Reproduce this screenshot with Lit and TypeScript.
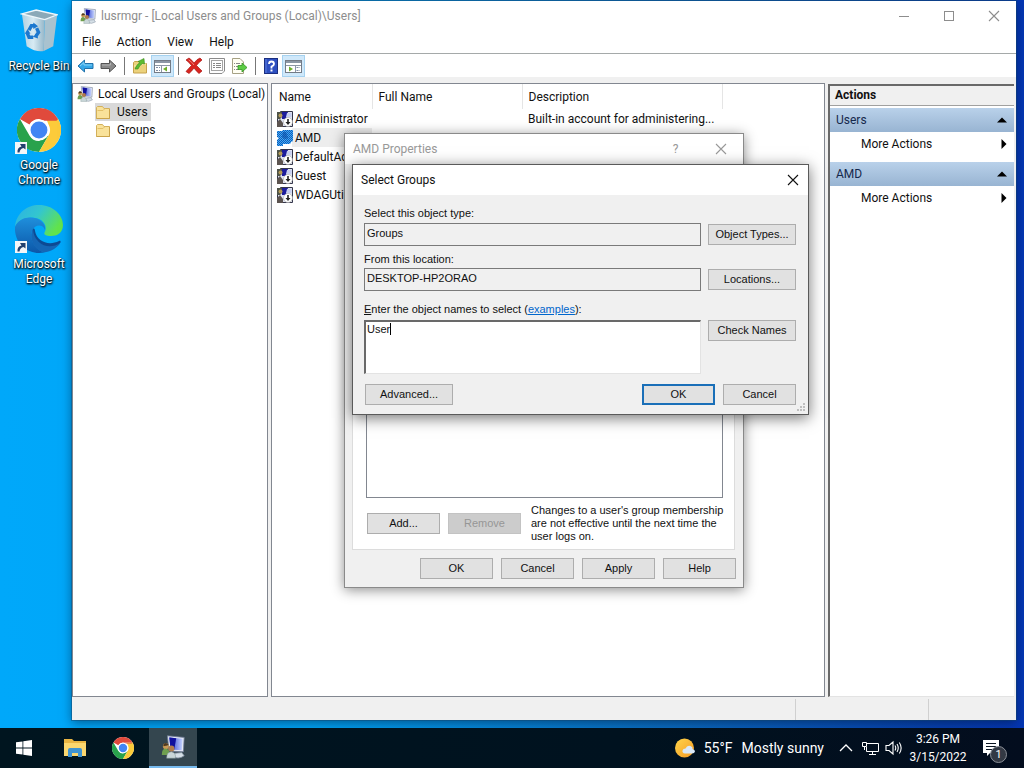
import { LitElement, html, css, svg, nothing } from "lit";
import { customElement, property } from "lit/decorators.js";
import { classMap } from "lit/directives/class-map.js";

const pcBody = svg`
  <path d="M8 1 L29 3 L28 21 L10 20Z" fill="#e4e8f2" stroke="#6c7894" stroke-width="1"/>
  <path d="M10.500 3 L27 4.800 L26 19 L12 18Z" fill="url(#scr)"/>
  <path d="M10.500 3 L19 4 L16.500 18.300 L12 18Z" fill="#10109c"/>
  <path d="M15 23 L26 22 L29 26 Q22 31 14 27Z" fill="#d5dfe6" stroke="#8390a0"/>
  <circle cx="6" cy="14" r="3.600" fill="#c99a55"/>
  <path d="M1 25 Q1 17 6 17 Q11 18 11 25Z" fill="#6f9f4f"/>
  <circle cx="13" cy="17" r="3.800" fill="#b07c4c"/>
  <path d="M7 29 Q7 21 13 21 Q19 22 18 29Z" fill="#c9d6d8" stroke="#768c8c" stroke-width=".6"/>
  <path d="M3 12 Q5 8 9.500 12 L8 13 L3 14Z" fill="#4f3a22"/>`;
const scr = svg`<defs><linearGradient id="scr"><stop offset="0" stop-color="#2436c8"/><stop offset="1" stop-color="#c6d4ff"/></linearGradient></defs>`;

const pcIcon = (s: number) => html`<svg class="pc" width=${s} height=${s} viewBox="0 0 30 30" aria-hidden="true">${scr}${pcBody}</svg>`;

const userIcon = html`<svg width="16" height="16" viewBox="0 0 16 16" aria-hidden="true">
  <path d="M3.500 .5H15.500V15.500H.5V8Z" fill="#dfe3f1" stroke="#33354a"/>
  <path d="M5 1H11L9 8H5Z" fill="#1c1c9c"/><path d="M10 2H14.500V6H9Z" fill="#c6cef0"/>
  <path d="M0 1H5V6L3 8H0Z" fill="#4e5348"/><circle cx="3.500" cy="4.500" r="2" fill="#b59c58"/>
  <path d="M0 16V11L3 8L6 12V16Z" fill="#5c5450"/>
  <circle cx="11" cy="11" r="4.500" fill="#fff" stroke="#aaa" stroke-width=".6"/>
  <path d="M10.200 8H11.800V11H13.500L11 14L8.500 11H10.200Z" fill="#222"/></svg>`;

const userSelIcon = html`<svg width="16" height="16" viewBox="0 0 16 16" aria-hidden="true">
  <defs><pattern id="dith" width="2" height="2" patternUnits="userSpaceOnUse"><rect width="2" height="2" fill="#4ba6ee"/><rect width="1" height="1" fill="#0a5cb8"/><rect x="1" y="1" width="1" height="1" fill="#0a66c8"/></pattern></defs>
  <path d="M0 1H5L6 0H16V11L14 12V13L12 14H6V16H0V10L2 8L0 7Z" fill="url(#dith)"/><path d="M6 2H9L11 8L8 9L5 7Z" fill="#0a50a8" opacity=".6"/></svg>`;

const folderIcon = html`<svg width="16" height="16" viewBox="0 0 16 16" aria-hidden="true">
  <path d="M1.500 3.500V14.500H14.500V4.500H9L7.500 2.500H2.500Z" fill="#f9e29a" stroke="#d3b05a"/>
  <path d="M2.500 6.500H8L10 4.500" fill="none" stroke="#e2c069"/><path d="M14.500 5V14.500H1.500" fill="none" stroke="#cba44a"/></svg>`;

const arrow = (flip: boolean) => html`<svg width="17" height="16" viewBox="0 0 17 16" aria-hidden="true">
  ${flip
    ? svg`<path d="M16 8L9.500 2V5.500H1V10.500H9.500V14Z" fill="#8a8a8a" stroke="#555"/><path d="M2 7H10.500V5" stroke="#b4b4b4" fill="none"/>`
    : svg`<path d="M1 8L7.500 2V5.500H16V10.500H7.500V14Z" fill="#35a7e8" stroke="#2272ab"/><path d="M3 8L7 4.500V7H15" stroke="#8ad4f8" fill="none"/>`}</svg>`;

const upFolder = html`<svg width="16" height="16" viewBox="0 0 16 16" aria-hidden="true">
  <path d="M1.500 4.500V15H14.500V5.500H10L8.500 3.500H2.500Z" fill="#ecd27c" stroke="#c6a24d"/><path d="M2 8H8L10 6H14" fill="none" stroke="#fff0b4"/>
  <path d="M3 11Q4 7 8 4.500L6 3.500L12 .5L12.500 6L10.500 5.500Q7 8 6 11Z" fill="#5ebc32" stroke="#3b8c1d" stroke-width=".6"/></svg>`;

const paneIcon = (right: boolean) => html`<svg width="17" height="16" viewBox="0 0 17 16" aria-hidden="true">
  <rect x=".5" y="2.500" width="16" height="12" fill="#fff" stroke="#737b86"/><rect x="1" y="3" width="15" height="2" fill="#8c97a5"/>
  <path d="M1 7.500H16M${right ? 10.500 : 7.500} 7V14" stroke="#8c97a5" fill="none"/>
  <path d=${right ? "M11.500 9.500H15M11.500 12.500H15" : "M2 9.500H6M2 12.500H6"} stroke="#7d8da4" stroke-dasharray="2 1"/>
  <path d=${right ? "M4 8.500L8 11L4 13.500Z" : "M13 8.500L9 11L13 13.500Z"} fill="#6cae28"/></svg>`;

const delIcon = html`<svg width="18" height="17" viewBox="0 0 18 17" aria-hidden="true">
  <path d="M1 3L4 1Q7 3 9 6Q12 2 15 1L17 3Q13 6 11.500 8.500Q14 11 17 14L14 16.500Q11 14 9 11Q7 14 4 16.500L1 14.500Q4 11 6.500 8.500Q4 5 1 3Z" fill="#d8241f" stroke="#a81512" stroke-width=".7"/><path d="M3.500 2.800Q7 5 9 8" stroke="#f08078" fill="none"/></svg>`;

const propIcon = html`<svg width="16" height="16" viewBox="0 0 16 16" aria-hidden="true">
  <path d="M.5 .5H15.500V13L13 15.500H.5Z" fill="#fdfdfd" stroke="#8b8b8b"/><rect x="2.500" y="2.500" width="11" height="10" fill="#fff" stroke="#a4a4a4"/>
  <path d="M4 5.500H6M7 5.500H12M4 7.500H6M7 7.500H12M4 9.500H6M7 9.500H12" stroke="#888"/></svg>`;

const exportIcon = html`<svg width="17" height="16" viewBox="0 0 17 16" aria-hidden="true">
  <path d="M1.500 .5H9L12.500 4V15.500H1.500Z" fill="#fffef2" stroke="#a6a184"/><path d="M3 5.500H4M5 5.500H9M3 8.500H4M5 8.500H8M3 11.500H4M5 11.500H8" stroke="#888"/>
  <path d="M7 7.500H11V5L16 9.500L11 14V11.500H7Z" fill="#5dcc45" stroke="#329522" stroke-width=".8"/></svg>`;

const helpIcon = html`<svg width="14" height="16" viewBox="0 0 14 16" aria-hidden="true">
  <rect x=".5" y=".5" width="13" height="15" fill="#2d4fc0" stroke="#1b2f80"/><path d="M2 1V15" stroke="#5f80e0"/>
  <path d="M5 6Q5 3.500 7.500 3.500Q10 3.500 10 6Q10 7.500 7.500 8.500V10.500" stroke="#fff" stroke-width="1.800" fill="none"/><rect x="6.500" y="11.500" width="2" height="2" fill="#fff"/></svg>`;

const chromeIcon = (s: number) => html`<svg width=${s} height=${s} viewBox="0 0 48 48" aria-hidden="true">
  <circle cx="24" cy="24" r="24" fill="#fff"/>
  <path d="M3.200 12A24 24 0 0 1 44.800 12H24A12 12 0 0 0 13.600 18Z" fill="#e04a3c"/>
  <path d="M3.200 12 L13.600 30A12 12 0 0 0 24 36L24 48A24 24 0 0 1 3.200 12Z" fill="#29a24c"/>
  <path d="M24 36 L34.400 30 L24 48Z" fill="#29a24c"/>
  <path d="M44.800 12A24 24 0 0 1 24 48L34.400 30A12 12 0 0 0 34.400 18L32 12Z" fill="#fccb3a"/>
  <path d="M24 12H44.800L43 14H30Z" fill="#e04a3c"/>
  <circle cx="24" cy="24" r="11.500" fill="#fff"/><circle cx="24" cy="24" r="9.200" fill="#4285f4"/></svg>`;

const edgeIcon = html`<svg width="48" height="48" viewBox="0 0 48 48" aria-hidden="true">
  <defs><linearGradient id="eg" x1="0" y1="0" x2="1" y2=".5"><stop offset="0" stop-color="#2bb0e6"/><stop offset=".5" stop-color="#33c6cf"/><stop offset="1" stop-color="#62e34c"/></linearGradient>
  <linearGradient id="eb" x1="0" y1="0" x2="0" y2="1"><stop offset="0" stop-color="#1f8fdc"/><stop offset="1" stop-color="#0c57a8"/></linearGradient></defs>
  <path d="M0 22C1 8 12 0 24 0C38 0 48 10 48 20C48 28 42 31 36 31C31 31 28.500 29.500 29.500 27.500C32 24 31 17 24 14C14 10 3 14 0 22Z" fill="url(#eg)"/>
  <path d="M0 22C3 14 12 11 20 13C27 15 31 20 30 25C28 19 20 19 17 26C14 34 20 45 30 47.300C14 51 -1 39 0 22Z" fill="url(#eb)"/>
  <path d="M18 24C14 34 22 44 34 44C39 43.500 43 41 45.500 37.500C46 36 45 35.500 44 36C34 41 22 37 20 26C20 24 19 23 18 24Z" fill="#0d4a93"/>
  <path d="M18 24C13 33 19 46 30 47.300C37 46.500 43 42 45.500 37.500C35 46 19 40 18 24Z" fill="#1566b5"/></svg>`;

const binIcon = html`<svg width="38" height="44" viewBox="0 0 40 46" aria-hidden="true">
  <defs><linearGradient id="bn"><stop offset="0" stop-color="#b9d2df"/><stop offset=".5" stop-color="#e3eef3"/><stop offset="1" stop-color="#9db7c6"/></linearGradient></defs>
  <path d="M2 5L7 39Q18 46 25 44L26 11Z" fill="url(#bn)" opacity=".95"/>
  <path d="M26 11L25 44L35 39L39 7Z" fill="#a9c2cf"/>
  <path d="M2 5L17 1L39 6L26 11Z" fill="#8ba9b8" stroke="#eef6fa" stroke-width="1.500"/>
  <g fill="none" stroke="#1c78cf" stroke-width="3.600"><path d="M9.500 22L12 17.500H16"/><path d="M17.500 20L19.500 24.500L17 28"/><path d="M14 29.500H9.500L7.500 25"/></g>
  <path d="M14 14L19 18L14 21ZM19 31L13.500 29L18 25ZM5 26L8 21L11 26Z" fill="#1c78cf"/></svg>`;

const shortcut = html`<svg class="link-mark" width="12" height="12" viewBox="0 0 12 12" aria-hidden="true"><rect width="12" height="12" fill="#f4f6f8"/><path d="M2.500 10.500Q2 5.500 6.500 4.500L5 2H10.500V7.500L8.500 6Q5 6.500 4.500 10.500Z" fill="#23406e"/></svg>`;

const closeGlyph = html`<svg width="12" height="12" viewBox="0 0 12 12" aria-hidden="true"><path d="M1 1L11 11M11 1L1 11" stroke="currentColor" stroke-width="1.100"/></svg>`;
const minGlyph = html`<svg width="12" height="12" viewBox="0 0 12 12" aria-hidden="true"><path d="M1 6.500H11" stroke="currentColor"/></svg>`;
const maxGlyph = html`<svg width="12" height="12" viewBox="0 0 12 12" aria-hidden="true"><rect x="1.500" y="1.500" width="9" height="9" fill="none" stroke="currentColor"/></svg>`;

const shared = css`
  * { box-sizing: border-box; }
  svg { display: block; flex: none; }
  button { font: inherit; color: inherit; margin: 0; padding: 0; border: 0; background: none; border-radius: 0; display: flex; align-items: center; justify-content: center; white-space: nowrap; }
  .classic { font: 11px/13px "Liberation Sans", Arial, sans-serif; }
  .push { height: 21px; background: #e1e1e1; border: 1px solid #adadad; min-width: 73px; }
  .push.primary { border: 2px solid #1a6fb8; }
  .push:disabled { background: #ccc; border-color: #c3c3c3; color: #969696; }
  .title { display: flex; align-items: center; height: 30px; flex: none; background: #fff; padding-left: 8px; }
  .title .name { flex: 1; }
`;

@customElement("console-window")
class ConsoleWindow extends LitElement {
  static styles = [shared, css`
    :host { display: flex; flex-direction: column; background: #f0f0f0; box-shadow: 0 0 0 1px rgba(20, 70, 110, .45), 0 3px 10px rgba(0, 20, 50, .5); color: #111; }
    .title { color: #8d8d8d; }
    .title .pc { margin-right: 5px; }
    .title button { width: 45px; height: 30px; }
    .menu { display: flex; height: 22px; background: #fff; padding: 0 2px; }
    .menu button { padding: 0 8px; }
    .tools { display: flex; height: 24px; background: #fff; border-top: 1px solid #a5a9a9; padding: 0 2px; align-items: center; }
    .tools button { width: 23px; height: 22px; }
    .tools .on { background: #cfe8fa; box-shadow: inset 0 0 0 1px #a5d2f0; }
    .sep { width: 8px; height: 18px; display: flex; justify-content: center; }
    .sep::before { content: ""; width: 1px; background: #777; }
    .panes { flex: 1; min-height: 0; display: grid; grid-template-columns: 196px minmax(0, 1fr) 188px; gap: 3px; margin-top: 6px; }
    .pane { background: #fff; border: 1px solid #828790; overflow: hidden; min-width: 0; }
    .tree { padding: 1px 0 0 4px; }
    .node { display: flex; align-items: center; height: 18px; gap: 5px; white-space: nowrap; }
    .child { margin-left: 18px; width: max-content; padding-right: 3px; gap: 6px; }
    .child.sel { background: #d9d9d9; }
    table { border-collapse: collapse; table-layout: fixed; width: 100%; }
    th { text-align: left; font-weight: 400; height: 25px; padding: 0 7px 0 6px; border-right: 1px solid #e5e5e5; }
    th:last-child { border: 0; }
    th:first-child { padding-left: 7px; }
    td { height: 19px; padding: 0 6px; white-space: nowrap; }
    td:first-child { padding: 0 0 0 5px; }
    .item { display: flex; align-items: center; gap: 2px; }
    tr.sel td:first-child { background: linear-gradient(90deg, #fff 20px, #ededed 20px); }
    .c1 { width: 100px; } .c2 { width: 150px; } .c3 { width: 200px; }
    .actions { border-width: 2px 0 1px 2px; border-color: #696969 transparent #e3e3e3 #696969; margin-right: 2px; margin-top: 1px; }
    .actions h2 { font-size: 12px; line-height: 19px; margin: 0 0 2px; padding-left: 5px; background: #f0f0f0; border-bottom: 1px solid #a0a0a0; }
    .group { background: linear-gradient(#b9d1ea, #98b4d2); height: 24px; width: 100%; justify-content: space-between; padding: 0 7px 0 6px; color: #15284b; }
    .more { height: 24px; width: 100%; justify-content: space-between; padding: 0 7px 0 31px; margin-bottom: 6px; }
    .status { display: flex; justify-content: flex-end; height: 23px; padding-top: 2px; }
    .status span { border-left: 1px solid #d0d0d0; width: 133px; }
    .status span + span { width: 88px; }
  `];

  render() {
    const rows: [string, string, boolean][] = [
      ["Administrator", "Built-in account for administering...", false],
      ["AMD", "", true],
      ["DefaultAccount", "A user account managed by the...", false],
      ["Guest", "Built-in account for guest access...", false],
      ["WDAGUtilityAccount", "A user account managed and used...", false],
    ];
    const tool = (label: string, icon: unknown, on = false) => html`<button aria-label=${label} class=${classMap({ on })}>${icon}</button>`;
    const sep = html`<div class="sep"></div>`;
    return html`
      <div class="title">${pcIcon(16)}<span class="name">lusrmgr - [Local Users and Groups (Local)\\Users]</span>
        <button aria-label="Minimize">${minGlyph}</button><button aria-label="Maximize">${maxGlyph}</button><button aria-label="Close">${closeGlyph}</button></div>
      <nav class="menu">${["File", "Action", "View", "Help"].map((m) => html`<button>${m}</button>`)}</nav>
      <div class="tools">
        ${tool("Back", arrow(false))}${tool("Forward", arrow(true))}${sep}
        ${tool("Up one level", upFolder)}${tool("Console tree", paneIcon(false), true)}${sep}
        ${tool("Delete", delIcon)}${tool("Properties", propIcon)}${tool("Export list", exportIcon)}${sep}
        ${tool("Help", helpIcon)}${tool("Action pane", paneIcon(true), true)}
      </div>
      <div class="panes">
        <div class="pane tree">
          <div class="node">${pcIcon(16)}<span>Local Users and Groups (Local)</span></div>
          <div class="node child sel">${folderIcon}<span>Users</span></div>
          <div class="node child">${folderIcon}<span>Groups</span></div>
        </div>
        <div class="pane">
          <table>
            <colgroup><col class="c1" /><col class="c2" /><col class="c3" /><col /></colgroup>
            <thead><tr><th>Name</th><th>Full Name</th><th>Description</th><th></th></tr></thead>
            <tbody>${rows.map(([n, d, sel]) => html`<tr class=${classMap({ sel })}>
              <td><div class="item">${sel ? userSelIcon : userIcon}${n}</div></td><td></td><td>${d}</td><td></td></tr>`)}</tbody>
          </table>
        </div>
        <aside class="pane actions">
          <h2>Actions</h2>
          ${["Users", "AMD"].map((g) => html`
            <button class="group">${g}<svg width="10" height="6" viewBox="0 0 10 6"><path d="M0 5.500L5 .5L10 5.500Z" fill="#000"/></svg></button>
            <button class="more">More Actions<svg width="6" height="10" viewBox="0 0 6 10"><path d="M.5 0L5.500 5L.5 10Z" fill="#000"/></svg></button>`)}
        </aside>
      </div>
      <div class="status"><span></span><span></span></div>`;
  }
}

@customElement("properties-dialog")
class PropertiesDialog extends LitElement {
  static styles = [shared, css`
    :host { display: flex; flex-direction: column; background: #f0f0f0; border: 1px solid #8a8a8a; box-shadow: 0 2px 12px rgba(0, 0, 0, .45); color: #111; }
    .title { color: #999; }
    .title button { width: 45px; height: 30px; }
    .page { flex: 1; min-height: 0; display: flex; flex-direction: column; background: #fff; border: 1px solid #dcdcdc; margin: 22px 8px 0 7px; padding: 12px 11px 6px 13px; }
    .members { flex: 1; border: 1px solid #828790; }
    .row { display: flex; align-items: center; gap: 8px; margin-top: 6px; padding-left: 1px; }
    .row p { margin: 0 0 0 2px; flex: 1; white-space: nowrap; }
    .foot { display: flex; justify-content: flex-end; gap: 8px; padding: 8px 7px; }
  `];

  render() {
    return html`
      <div class="title"><span class="name">AMD Properties</span><button aria-label="Help">?</button><button aria-label="Close">${closeGlyph}</button></div>
      <div class="page classic">
        <div class="members"></div>
        <div class="row"><button class="push">Add...</button><button class="push" disabled>Remove</button>
          <p>Changes to a user's group membership<br />are not effective until the next time the<br />user logs on.</p></div>
      </div>
      <div class="foot classic">${["OK", "Cancel", "Apply", "Help"].map((b) => html`<button class="push">${b}</button>`)}</div>`;
  }
}

@customElement("select-dialog")
class SelectDialog extends LitElement {
  static styles = [shared, css`
    :host { display: block; background: #f0f0f0; border: 1px solid #5a5a5a; box-shadow: 0 3px 14px rgba(0, 0, 0, .55); color: #111; }
    .title button { width: 30px; height: 30px; }
    .form { display: grid; grid-template-columns: minmax(0, 1fr) 88px; column-gap: 7px; padding: 11px 12px 9px 11px; }
    label { grid-column: 1 / -1; line-height: 15px; height: 17px; }
    label.names { margin-top: 9px; height: 20px; line-height: 18px; }
    label.second { margin-top: 6px; height: 16px; }
    input, textarea { font: inherit; color: inherit; width: 100%; margin: 0; border-radius: 0; outline: none; }
    input { height: 23px; border: 1px solid #7a7a7a; background: #f0f0f0; padding: 0 2px 4px; }
    .push { align-self: center; }
    .edit { position: relative; height: 54px; }
    textarea { display: block; height: 54px; resize: none; border: 1px solid #e3e3e3; border-top: 2px solid #696969; border-left: 2px solid #696969; padding: 1px; background: #fff; overflow: hidden; caret-color: transparent; }
    .caret { position: absolute; left: 26px; top: 3px; width: 1px; height: 12px; background: #000; }
    .edit + .push { align-self: start; }
    a { color: #0066cc; }
    .foot { grid-column: 1 / -1; display: flex; gap: 8px; margin-top: 10px; padding-left: 1px; }
    .foot .adv { width: 88px; margin-right: auto; }
    .grip { position: absolute; right: 2px; bottom: 2px; }
  `];

  render() {
    return html`
      <div class="title"><span class="name">Select Groups</span><button aria-label="Close">${closeGlyph}</button></div>
      <div class="form classic">
        <label for="type">Select this object type:</label>
        <input id="type" readonly .value=${"Groups"} /><button class="push">Object Types...</button>
        <label class="second" for="loc">From this location:</label>
        <input id="loc" readonly .value=${"DESKTOP-HP2ORAO"} /><button class="push">Locations...</button>
        <label class="names" for="names"><u>E</u>nter the object names to select (<a href="#">examples</a>):</label>
        <div class="edit"><textarea id="names" spellcheck="false" .value=${"User"}></textarea><span class="caret"></span></div>
        <button class="push">Check Names</button>
        <div class="foot"><button class="push adv">Advanced...</button><button class="push primary">OK</button><button class="push">Cancel</button></div>
      </div>
      <svg class="grip" width="10" height="10" viewBox="0 0 10 10" aria-hidden="true"><path d="M7 1h2v2h-2zM4 4h2v2h-2zM7 4h2v2h-2zM1 7h2v2h-2zM4 7h2v2h-2zM7 7h2v2h-2z" fill="#bfbfbf"/></svg>`;
  }
}

@customElement("task-bar")
class TaskBar extends LitElement {
  static styles = [shared, css`
    :host { display: flex; height: 40px; background: linear-gradient(90deg, #00151f, #00121f 60%, #030d1e); color: #fff; }
    .app { width: 48px; height: 40px; }
    .first { margin-right: 3px; }
    .app.on { background: #34464f; border-bottom: 2px solid #76b9ed; margin-left: 2px; }
    .weather { margin-left: auto; font-size: 14px; gap: 9px; padding: 0 10px; }
    .tray button { width: 24px; height: 40px; }
    .tray { display: flex; }
    .clock { flex-direction: column; line-height: 18px; width: 64px; }
    .notes { position: relative; width: 42px; height: 40px; margin-right: 12px; }
    .badge { position: absolute; left: 20px; top: 18px; width: 17px; height: 17px; border-radius: 50%; background: #333944; border: 1px solid #8b9098; font-size: 11px; line-height: 15px; text-align: center; }
  `];

  render() {
    return html`
      <button class="app first" aria-label="Start"><svg width="16" height="16" viewBox="0 0 16 16"><path d="M0 2.300L6.500 1.400V7.600H0ZM7.300 1.300L16 0V7.600H7.300ZM0 8.400H6.500V14.600L0 13.700ZM7.300 8.400H16V16L7.300 14.700Z" fill="#fff"/></svg></button>
      <button class="app" aria-label="File Explorer"><svg width="22" height="20" viewBox="0 0 22 20"><path d="M0 1H8L10 3H22V18H0Z" fill="#e9b543"/><path d="M0 5H22V18H0Z" fill="#fbd76f"/><path d="M4 19V12Q4 10 6 10H16Q18 10 18 12V19H14V15H8V19Z" fill="#3f93d0"/></svg></button>
      <button class="app" aria-label="Google Chrome">${chromeIcon(22)}</button>
      <button class="app on" aria-label="Local Users and Groups">${pcIcon(24)}</button>
      <button class="weather"><svg width="20" height="20" viewBox="0 0 20 20"><defs><linearGradient id="sun" x1="0" y1="0" x2="1" y2="1"><stop offset="0" stop-color="#ffd54a"/><stop offset="1" stop-color="#f59a23"/></linearGradient></defs><circle cx="9.500" cy="10" r="9.500" fill="url(#sun)"/><path d="M10 15.500Q7 15 7.500 12.500Q8 10.500 10.500 10.500Q12 7 15.500 8Q18 9 17.500 11Q20 11.500 20 13.500Q19.500 15.500 17 15.500Z" fill="#d9e8f8"/></svg><span>55°F</span><span>Mostly sunny</span></button>
      <div class="tray">
        <button aria-label="Show hidden icons"><svg width="14" height="8" viewBox="0 0 14 8"><path d="M1 7L7 1L13 7" fill="none" stroke="#fff" stroke-width="1.300"/></svg></button>
        <button aria-label="Network"><svg width="17" height="15" viewBox="0 0 17 15"><path d="M5 2.500H16.500V10.500H4.500V6M10.500 10.500V13.500M7 13.500H14M.5 1.500H4.500V5.500H.5ZM2.500 5.500V9" fill="none" stroke="#fff"/></svg></button>
        <button aria-label="Volume"><svg width="18" height="16" viewBox="0 0 18 16"><path d="M1 5.500H4L8 2V14L4 10.500H1ZM10 5.500Q11.500 8 10 10.500M12 4Q14.500 8 12 12M14.300 2.500Q18 8 14.300 13.500" fill="none" stroke="#fff" stroke-width="1.100"/></svg></button>
      </div>
      <button class="clock"><span>3:26 PM</span><span>3/15/2022</span></button>
      <button class="notes" aria-label="Notifications"><svg width="16" height="16" viewBox="0 0 16 16"><path d="M0 0H16V13H7L4 16V13H0Z" fill="#fff"/><path d="M3 3.500H13M3 6.500H13M3 9.500H9" stroke="#0a1522"/></svg><span class="badge">1</span></button>`;
  }
}

@customElement("desktop-shortcut")
class DesktopShortcut extends LitElement {
  @property() kind = "bin";
  @property() label = "";
  static styles = [shared, css`
    :host { display: block; min-height: 82px; }
    button { flex-direction: column; width: 78px; justify-content: flex-start; }
    .art { position: relative; height: 48px; width: 48px; display: flex; align-items: center; justify-content: center; }
    .link-mark { position: absolute; left: 0; bottom: 0; }
    .label { color: #fff; line-height: 15px; white-space: pre-line; margin-top: 4px; text-shadow: 0 1px 2px #000, 1px 1px 2px #000; }
  `];

  render() {
    const art = { bin: binIcon, chrome: chromeIcon(44), edge: edgeIcon }[this.kind];
    return html`<button><span class="art">${art}${this.kind === "bin" ? nothing : shortcut}</span><span class="label">${this.label}</span></button>`;
  }
}

@customElement("app-root")
class AppRoot extends LitElement {
  static styles = [shared, css`
    :host { display: flex; flex-direction: column; height: 100vh; overflow: hidden; font: 12px/16px Roboto, "Noto Sans", sans-serif; }
    .desktop { flex: 1; position: relative; min-height: 0; overflow: hidden; background: linear-gradient(90deg, #00a8fa, #00a4f4 30%, #0a6cc0 65%, #063fae 92%, #0436b4); }
    .icons { display: flex; flex-direction: column; gap: 17px; padding-top: 7px; width: 78px; }
    console-window { position: absolute; left: 72px; right: 8px; top: 1px; bottom: 8px; }
    properties-dialog { position: absolute; left: 344px; top: 133px; width: 400px; height: 455px; }
    select-dialog { position: absolute; left: 352px; top: 164px; width: 457px; }
  `];

  render() {
    return html`
      <main class="desktop">
        <div class="icons">
          <desktop-shortcut kind="bin" label="Recycle Bin"></desktop-shortcut>
          <desktop-shortcut kind="chrome" label=${"Google\nChrome"}></desktop-shortcut>
          <desktop-shortcut kind="edge" label=${"Microsoft\nEdge"}></desktop-shortcut>
        </div>
        <console-window></console-window>
        <properties-dialog></properties-dialog>
        <select-dialog></select-dialog>
      </main>
      <task-bar></task-bar>`;
  }
}
